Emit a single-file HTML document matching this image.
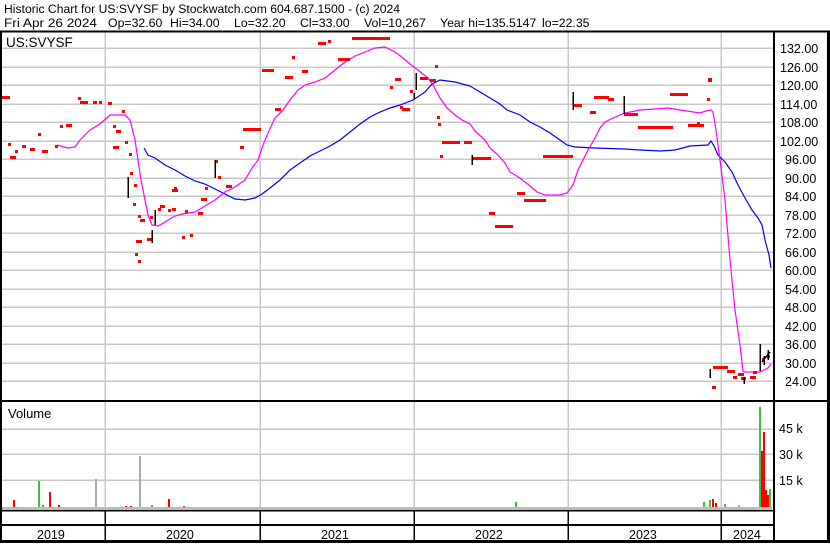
<!DOCTYPE html>
<html><head><style>
body{margin:0;background:#fff;width:830px;height:543px;overflow:hidden;font-family:"Liberation Sans",Arial,sans-serif}
svg text{font-family:"Liberation Sans",Arial,sans-serif}
</style></head><body>
<svg width="830" height="543" xmlns="http://www.w3.org/2000/svg" shape-rendering="crispEdges">
<rect width="830" height="543" fill="#fff"/>
<text x="4" y="13" font-size="12.3" textLength="396" lengthAdjust="spacingAndGlyphs">Historic Chart for US:SVYSF by Stockwatch.com 604.687.1500 - (c) 2024</text>
<g font-size="12.3">
<text x="4" y="27" textLength="93" lengthAdjust="spacingAndGlyphs">Fri Apr 26 2024</text>
<text x="108" y="27">Op=32.60</text>
<text x="170" y="27">Hi=34.00</text>
<text x="234" y="27">Lo=32.20</text>
<text x="300" y="27">Cl=33.00</text>
<text x="364" y="27">Vol=10,267</text>
<text x="440" y="27">Year hi=135.5147</text>
<text x="542" y="27">lo=22.35</text>
</g>
<g stroke="#c8c8c8" stroke-width="1.5">
<line x1="105" y1="32" x2="105" y2="510"/><line x1="260" y1="32" x2="260" y2="510"/><line x1="414" y1="32" x2="414" y2="510"/><line x1="568" y1="32" x2="568" y2="510"/><line x1="721" y1="32" x2="721" y2="510"/>
<line x1="2" y1="48" x2="773" y2="48"/><line x1="2" y1="67" x2="773" y2="67"/><line x1="2" y1="85" x2="773" y2="85"/><line x1="2" y1="104" x2="773" y2="104"/><line x1="2" y1="122" x2="773" y2="122"/><line x1="2" y1="141" x2="773" y2="141"/><line x1="2" y1="159" x2="773" y2="159"/><line x1="2" y1="178" x2="773" y2="178"/><line x1="2" y1="196" x2="773" y2="196"/><line x1="2" y1="215" x2="773" y2="215"/><line x1="2" y1="233" x2="773" y2="233"/><line x1="2" y1="252" x2="773" y2="252"/><line x1="2" y1="270" x2="773" y2="270"/><line x1="2" y1="289" x2="773" y2="289"/><line x1="2" y1="307" x2="773" y2="307"/><line x1="2" y1="326" x2="773" y2="326"/><line x1="2" y1="344" x2="773" y2="344"/><line x1="2" y1="363" x2="773" y2="363"/><line x1="2" y1="381" x2="773" y2="381"/>
<line x1="2" y1="429" x2="773" y2="429"/><line x1="2" y1="454" x2="773" y2="454"/><line x1="2" y1="480" x2="773" y2="480"/>
</g>
<g font-size="12.5">
<text x="780" y="53">132.00</text><text x="780" y="72">126.00</text><text x="780" y="90">120.00</text><text x="780" y="109">114.00</text><text x="780" y="127">108.00</text><text x="780" y="146">102.00</text><text x="785" y="164">96.00</text><text x="785" y="183">90.00</text><text x="785" y="201">84.00</text><text x="785" y="220">78.00</text><text x="785" y="238">72.00</text><text x="785" y="257">66.00</text><text x="785" y="275">60.00</text><text x="785" y="294">54.00</text><text x="785" y="312">48.00</text><text x="785" y="331">42.00</text><text x="785" y="349">36.00</text><text x="785" y="368">30.00</text><text x="785" y="386">24.00</text>
<text x="779" y="433">45 k</text><text x="779" y="459">30 k</text><text x="779" y="485">15 k</text>
<text x="6" y="47" font-size="13.5">US:SVYSF</text>
<text x="8" y="418" font-size="13">Volume</text>
<text x="37" y="539">2019</text><text x="166" y="539">2020</text><text x="321" y="539">2021</text><text x="475" y="539">2022</text><text x="629" y="539">2023</text><text x="733" y="539">2024</text>
</g>
<g fill="none" stroke-width="1.2" shape-rendering="auto">
<polyline stroke="#0000ff" points="144,148 148,155 155,158 165,165 175,170 185,176 195,181 205,184 215,189 225,194 235,199 245,200 255,198 262,194 270,188 280,180 290,170 300,163 310,156 320,151 330,146 340,140 350,132 360,124 370,117 380,112 390,108 400,105 413,100 425,92 432,84 440,80 455,82 470,86 480,92 490,98 500,104 507,110 520,115 530,122 540,127 550,133 560,140 567,145 575,147 595,148 625,149 640,150 660,151 675,150 690,146 708,145 711,141 714,146 718,155 725,162 732,172 738,185 745,198 752,210 758,218 762,225 765,240 769,255 771,268"/>
<polyline stroke="#ff00ff" points="57,145 68,148 75,147 80,140 85,135 90,130 100,124 110,115 125,115 130,120 135,140 138,160 141,180 145,200 148,215 152,225 158,226 165,222 175,216 182,214 195,212 205,206 215,200 225,192 235,187 245,180 252,168 258,160 263,145 268,133 275,118 283,110 290,100 298,90 305,85 315,82 325,78 335,70 345,62 355,56 365,52 375,48 385,47 395,52 403,58 410,64 418,70 428,78 433,85 440,98 447,108 455,115 462,120 470,124 475,131 485,140 490,148 498,155 505,163 510,172 520,178 530,186 537,192 545,195 560,195 567,193 573,185 578,170 583,160 588,150 595,138 600,128 605,122 613,118 625,113 640,110 655,109 668,108 680,110 700,113 706,111 711,110 713,112 716,130 720,160 725,200 730,260 735,310 740,345 743,371 745,372 760,372 768,368 771,364"/>
</g>
<g fill="#ff0000">
<rect x="2" y="96" width="8" height="3"/><rect x="8" y="143" width="3" height="3"/><rect x="10" y="156" width="6" height="3"/><rect x="15" y="150" width="3" height="3"/><rect x="22" y="145" width="4" height="3"/><rect x="30" y="148" width="5" height="3"/><rect x="38" y="133" width="3" height="3"/><rect x="42" y="150" width="6" height="3"/><rect x="55" y="145" width="3" height="3"/><rect x="60" y="125" width="3" height="3"/><rect x="66" y="124" width="6" height="3"/><rect x="78" y="97" width="3" height="3"/><rect x="80" y="101" width="8" height="3"/><rect x="93" y="101" width="4" height="3"/><rect x="99" y="101" width="3" height="3"/><rect x="108" y="102" width="4" height="3"/><rect x="113" y="125" width="3" height="3"/><rect x="116" y="130" width="5" height="3"/><rect x="122" y="110" width="3" height="3"/><rect x="113" y="146" width="6" height="3"/><rect x="125" y="141" width="3" height="3"/><rect x="129" y="153" width="3" height="3"/><rect x="130" y="172" width="3" height="3"/><rect x="134" y="184" width="3" height="3"/><rect x="133" y="203" width="3" height="3"/><rect x="138" y="215" width="3" height="3"/><rect x="140" y="219" width="5" height="3"/><rect x="150" y="216" width="3" height="3"/><rect x="147" y="238" width="6" height="3"/><rect x="135" y="253" width="3" height="3"/><rect x="138" y="260" width="3" height="3"/><rect x="136" y="240" width="6" height="3"/><rect x="158" y="208" width="3" height="3"/><rect x="160" y="205" width="5" height="3"/><rect x="168" y="209" width="3" height="3"/><rect x="172" y="208" width="4" height="3"/><rect x="174" y="187" width="3" height="3"/><rect x="182" y="236" width="3" height="3"/><rect x="185" y="210" width="3" height="3"/><rect x="190" y="234" width="3" height="3"/><rect x="172" y="189" width="6" height="3"/><rect x="198" y="212" width="5" height="3"/><rect x="201" y="198" width="6" height="3"/><rect x="205" y="187" width="3" height="3"/><rect x="215" y="160" width="3" height="3"/><rect x="218" y="176" width="3" height="3"/><rect x="226" y="185" width="6" height="3"/><rect x="240" y="146" width="4" height="3"/><rect x="243" y="128" width="18" height="3"/><rect x="262" y="69" width="12" height="3"/><rect x="275" y="108" width="6" height="3"/><rect x="285" y="76" width="8" height="3"/><rect x="292" y="56" width="3" height="3"/><rect x="302" y="70" width="6" height="3"/><rect x="318" y="42" width="8" height="3"/><rect x="328" y="40" width="3" height="3"/><rect x="338" y="58" width="12" height="3"/><rect x="352" y="37" width="38" height="3"/><rect x="390" y="86" width="3" height="3"/><rect x="395" y="78" width="6" height="3"/><rect x="400" y="106" width="3" height="3"/><rect x="402" y="108" width="8" height="3"/><rect x="410" y="90" width="3" height="3"/><rect x="420" y="77" width="8" height="3"/><rect x="430" y="79" width="6" height="3"/><rect x="435" y="65" width="3" height="3"/><rect x="437" y="116" width="3" height="3"/><rect x="438" y="123" width="3" height="3"/><rect x="442" y="141" width="18" height="3"/><rect x="464" y="141" width="8" height="3"/><rect x="440" y="155" width="3" height="3"/><rect x="473" y="157" width="18" height="3"/><rect x="489" y="212" width="6" height="3"/><rect x="495" y="225" width="18" height="3"/><rect x="517" y="192" width="8" height="3"/><rect x="524" y="199" width="22" height="3"/><rect x="543" y="155" width="30" height="3"/><rect x="574" y="104" width="8" height="3"/><rect x="594" y="96" width="15" height="3"/><rect x="590" y="111" width="6" height="3"/><rect x="608" y="98" width="6" height="3"/><rect x="624" y="113" width="14" height="3"/><rect x="638" y="126" width="35" height="3"/><rect x="670" y="93" width="18" height="3"/><rect x="688" y="124" width="16" height="3"/><rect x="697" y="122" width="3" height="3"/><rect x="707" y="98" width="3" height="3"/><rect x="708" y="78" width="4" height="4"/><rect x="713" y="366" width="3" height="3"/><rect x="716" y="366" width="12" height="3"/><rect x="712" y="386" width="4" height="3"/><rect x="727" y="370" width="8" height="3"/><rect x="733" y="376" width="4" height="3"/><rect x="738" y="373" width="6" height="3"/><rect x="741" y="377" width="5" height="3"/><rect x="750" y="376" width="6" height="3"/><rect x="753" y="371" width="4" height="3"/><rect x="762" y="358" width="3" height="3"/><rect x="767" y="355" width="3" height="3"/>
</g>
<g stroke="#000" stroke-width="1.5">
<line x1="128" y1="177" x2="128" y2="198"/><line x1="155" y1="210" x2="155" y2="225"/><line x1="152" y1="230" x2="152" y2="243"/><line x1="215" y1="160" x2="215" y2="178"/><line x1="416" y1="73" x2="416" y2="90"/><line x1="414" y1="93" x2="414" y2="99"/><line x1="472" y1="155" x2="472" y2="165"/><line x1="573" y1="92" x2="573" y2="110"/><line x1="624" y1="96" x2="624" y2="114"/><line x1="710" y1="369" x2="710" y2="378"/><line x1="744" y1="377" x2="744" y2="384"/><line x1="760" y1="344" x2="760" y2="371"/><line x1="762" y1="362" x2="770" y2="352"/><line x1="764" y1="356" x2="764" y2="365"/><line x1="768" y1="350" x2="768" y2="360"/>
</g>
<g>
<rect x="38" y="481" width="2" height="29" fill="#44bb44"/><rect x="13" y="500" width="2" height="10" fill="#ff0000"/><rect x="49" y="492" width="2" height="18" fill="#ff0000"/><rect x="58" y="505" width="2" height="5" fill="#ff0000"/><rect x="42" y="505" width="2" height="5" fill="#44bb44"/><rect x="95" y="479" width="2" height="31" fill="#aaaaaa"/><rect x="139" y="456" width="2" height="54" fill="#aaaaaa"/><rect x="168" y="499" width="2" height="11" fill="#ff0000"/><rect x="130" y="506" width="2" height="4" fill="#ff0000"/><rect x="151" y="505" width="2" height="5" fill="#44bb44"/><rect x="125" y="506" width="2" height="4" fill="#ff0000"/><rect x="183" y="506" width="2" height="4" fill="#ff0000"/><rect x="515" y="502" width="2" height="8" fill="#44bb44"/><rect x="703" y="502" width="2" height="8" fill="#44bb44"/><rect x="709" y="500" width="2" height="10" fill="#44bb44"/><rect x="712" y="499" width="2" height="11" fill="#ff0000"/><rect x="715" y="503" width="2" height="7" fill="#ff0000"/><rect x="724" y="504" width="2" height="6" fill="#44bb44"/><rect x="738" y="505" width="2" height="5" fill="#aaaaaa"/><rect x="759" y="407" width="2" height="103" fill="#44bb44"/><rect x="761" y="451" width="2" height="59" fill="#ff0000"/><rect x="763" y="432" width="2" height="78" fill="#ff0000"/><rect x="765" y="490" width="2" height="20" fill="#ff0000"/><rect x="767" y="495" width="2" height="15" fill="#ff0000"/><rect x="769" y="489" width="2" height="21" fill="#44bb44"/>
<rect x="2" y="507" width="770" height="3" fill="#bbbbbb"/>
</g>
<g stroke="#000">
<line x1="0" y1="31.5" x2="830" y2="31.5" stroke-width="2"/>
<line x1="1" y1="31" x2="1" y2="543" stroke-width="2"/>
<line x1="828.5" y1="31" x2="828.5" y2="543" stroke-width="3"/>
<line x1="774" y1="31" x2="774" y2="543" stroke-width="2"/>
<line x1="0" y1="401" x2="830" y2="401" stroke-width="2"/>
<line x1="0" y1="510.5" x2="774" y2="510.5" stroke-width="1.5"/>
<line x1="0" y1="525" x2="774" y2="525" stroke-width="2"/>
<line x1="0" y1="541.5" x2="830" y2="541.5" stroke-width="3"/>
<line x1="105" y1="510" x2="105" y2="542" stroke-width="1.5"/><line x1="260" y1="510" x2="260" y2="542" stroke-width="1.5"/><line x1="414" y1="510" x2="414" y2="542" stroke-width="1.5"/><line x1="568" y1="510" x2="568" y2="542" stroke-width="1.5"/><line x1="721" y1="510" x2="721" y2="542" stroke-width="1.5"/>
</g>
</svg>
</body></html>
